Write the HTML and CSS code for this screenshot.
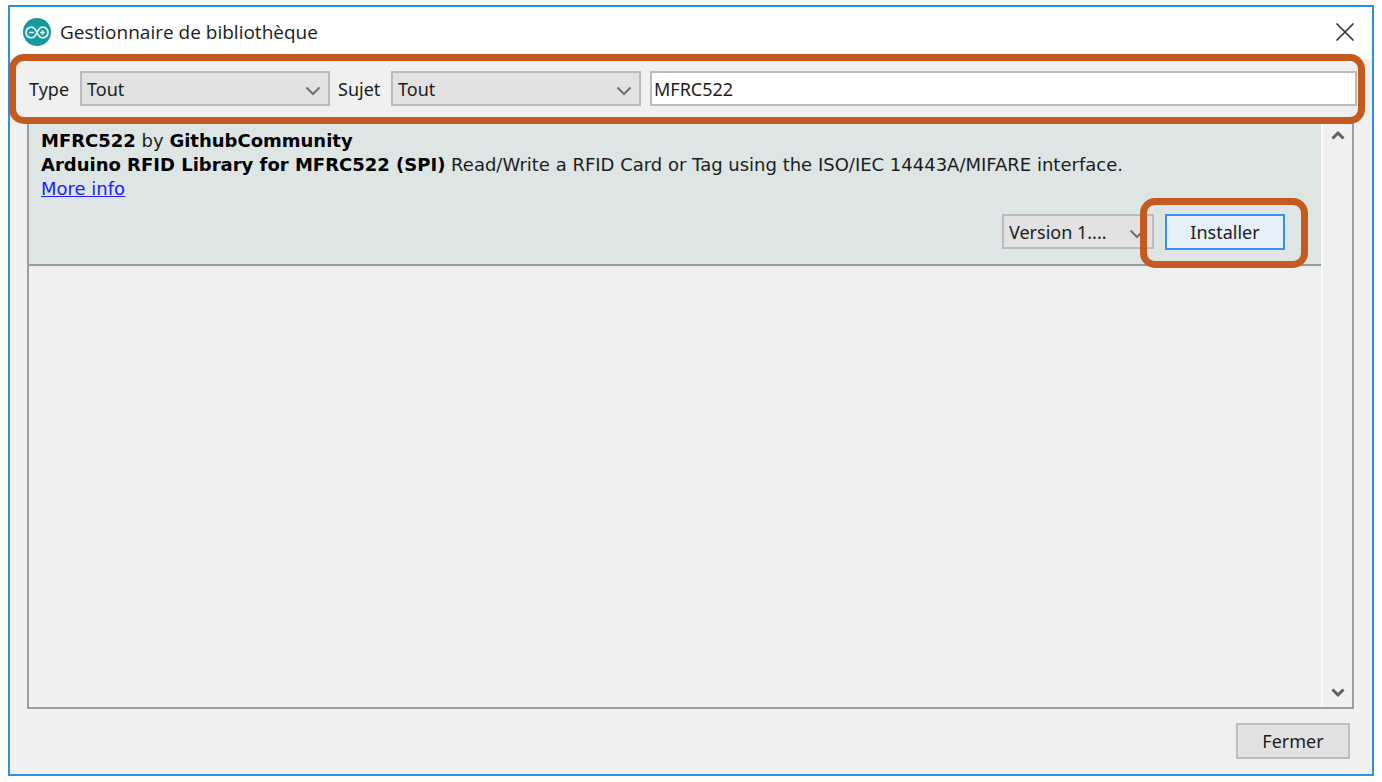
FILE: index.html
```html
<!DOCTYPE html>
<html lang="fr">
<head>
<meta charset="utf-8">
<meta name="viewport" content="width=device-width, initial-scale=1">
<title>Gestionnaire de bibliothèque</title>
<link rel="stylesheet" href="styles.css">
</head>
<body>
<main class="window">
  <header class="titlebar">
    <svg class="logo" viewBox="0 0 28 28" aria-hidden="true">
      <circle cx="14" cy="14" r="14" fill="#17989d"/>
      <g fill="none" stroke="#d8f0f0" stroke-width="1.8">
        <path d="M14 14.500C12.500 11 11 9.200 8.300 9.200a5.300 5.300 0 0 0 0 10.600C11 19.800 12.500 18 14 14.500S17 9.200 19.700 9.200a5.300 5.300 0 0 1 0 10.600C17 19.800 15.500 18 14 14.500Z"/>
        <path d="M6 14.500h5M17 14.500h5M19.500 12v5" stroke-width="1.500"/>
      </g>
    </svg>
    <h1 class="title">Gestionnaire de bibliothèque</h1>
    <button class="close" type="button" aria-label="Quitter">
      <svg width="20" height="20" viewBox="0 0 20 20" aria-hidden="true"><path d="M1.500 1.500l17 17M18.500 1.500l-17 17" fill="none" stroke="#333" stroke-width="1.700"/></svg>
    </button>
  </header>

  <form class="filters marked">
    <label class="label" for="type">Type</label>
    <span class="combo">
      <select id="type"><option>Tout</option></select>
      <svg class="chevron" viewBox="0 0 16 10" aria-hidden="true"><path d="M1.500 1.500L8 8l6.500-6.500"/></svg>
    </span>
    <label class="label" for="topic">Sujet</label>
    <span class="combo">
      <select id="topic"><option>Tout</option></select>
      <svg class="chevron" viewBox="0 0 16 10" aria-hidden="true"><path d="M1.500 1.500L8 8l6.500-6.500"/></svg>
    </span>
    <input class="search" type="text" value="MFRC522" aria-label="Filtrer votre recherche">
  </form>

  <section class="list">
    <div class="items">
      <article class="item">
        <p class="text"><b>MFRC522</b> by <b>GithubCommunity</b></p>
        <p class="text"><b>Arduino RFID Library for MFRC522 (SPI)</b> Read/Write a RFID Card or Tag using the ISO/IEC 14443A/MIFARE interface.</p>
        <p class="text"><a href="#">More info</a></p>
        <div class="actions">
          <span class="combo version">
            <select aria-label="Version"><option>Version 1....</option></select>
            <svg class="chevron" viewBox="0 0 16 10" aria-hidden="true"><path d="M1.500 1.500L8 8l6.500-6.500"/></svg>
          </span>
          <span class="install marked"><button class="button primary" type="button">Installer</button></span>
        </div>
      </article>
    </div>
    <div class="scrollbar">
      <svg class="arrow" viewBox="0 0 14 10" aria-hidden="true"><path d="M1.500 8.500L7 3l5.500 5.500"/></svg>
      <svg class="arrow" viewBox="0 0 14 10" aria-hidden="true"><path d="M1.500 1.500L7 7l5.500-5.500"/></svg>
    </div>
  </section>

  <footer class="footer">
    <button class="button" type="button">Fermer</button>
  </footer>
</main>
</body>
</html>
```
FILE: styles.css
```css
* {
  box-sizing: border-box;
}

body {
  min-height: 100vh;
  margin: 0;
  padding: 5px 8px 6px;
  background: #fff;
  color: #1c1c1c;
  font: 18px/24px "Noto Sans", sans-serif;
}

select,
input,
button {
  margin: 0;
  color: inherit;
  font: inherit;
  border-radius: 0;
}

.window {
  display: flex;
  flex-direction: column;
  min-height: calc(100vh - 11px);
  border: 2px solid #2f8fe0;
  background: #f0f0f0;
}

.titlebar {
  display: flex;
  align-items: center;
  height: 52px;
  padding: 0 17px 2px 13px;
  background: #fff;
}

.logo {
  width: 28px;
  height: 28px;
}

.title {
  flex: 1;
  margin: 0 0 0 9px;
  font: 19px/28px "Open Sans", sans-serif;
}

.close {
  display: flex;
  padding: 0;
  border: 0;
  background: none;
}

/* Orange outline drawn over the area to point out */
.marked {
  position: relative;
}

.marked::after {
  content: "";
  position: absolute;
  border: 7px solid #c55a1f;
  border-radius: 15px;
  pointer-events: none;
}

.filters {
  display: flex;
  align-items: center;
  padding: 12px 15px 16px 19px;
}

.filters::after {
  inset: -5px 7px -2px -1px;
}

.label {
  width: 51px;
}

.combo + .label {
  width: 61px;
  padding-left: 8px;
}

.combo {
  display: flex;
  align-items: center;
  position: relative;
  width: 250px;
}

.combo select {
  width: 100%;
  height: 35px;
  padding: 0 30px 0 5px;
  appearance: none;
  border: 2px solid #b9bbc0;
  background: #e2e2e2;
}

.chevron {
  position: absolute;
  right: 9px;
  top: 15px;
  width: 16px;
  height: 10px;
  fill: none;
  stroke: #707070;
  stroke-width: 2;
  pointer-events: none;
}

.search {
  flex: 1;
  min-width: 0;
  height: 35px;
  margin-left: 9px;
  padding: 0 2px;
  border: 2px solid #b9bbc0;
  background: #fff;
}

.list {
  display: flex;
  flex: 1;
  margin: 0 18px 0 17px;
  border: 2px solid #9a9da3;
}

.items {
  flex: 1;
  border-right: 2px solid #fafafa;
}

.item {
  padding: 5px 36px 14px 12px;
  border-bottom: 2px solid #999c9c;
  background: #dde6e5;
}

.text {
  margin: 0;
  font: 18px/24px "DejaVu Sans", sans-serif;
}

.text b {
  color: #000;
}

.text a {
  color: #2020ff;
}

.actions {
  display: flex;
  justify-content: flex-end;
  gap: 11px;
  margin-top: 13px;
}

.version {
  width: 152px;
  height: 35px;
}

.button {
  width: 114px;
  height: 36px;
  padding: 0;
  border: 2px solid #bdbdbd;
  background: #e2e2e2;
}

.primary {
  width: 120px;
  border-color: #3c93dd;
  background: #e6f0fb;
}

.install {
  display: flex;
}

.install::after {
  inset: -16px -23px -18px -25px;
}

.scrollbar {
  display: flex;
  flex-direction: column;
  align-items: center;
  justify-content: space-between;
  width: 29px;
  padding: 6px 0 9px;
}

.arrow {
  width: 14px;
  height: 10px;
  fill: none;
  stroke: #606060;
  stroke-width: 3;
}

.footer {
  display: flex;
  justify-content: flex-end;
  padding: 14px 22px 15px;
}
```
